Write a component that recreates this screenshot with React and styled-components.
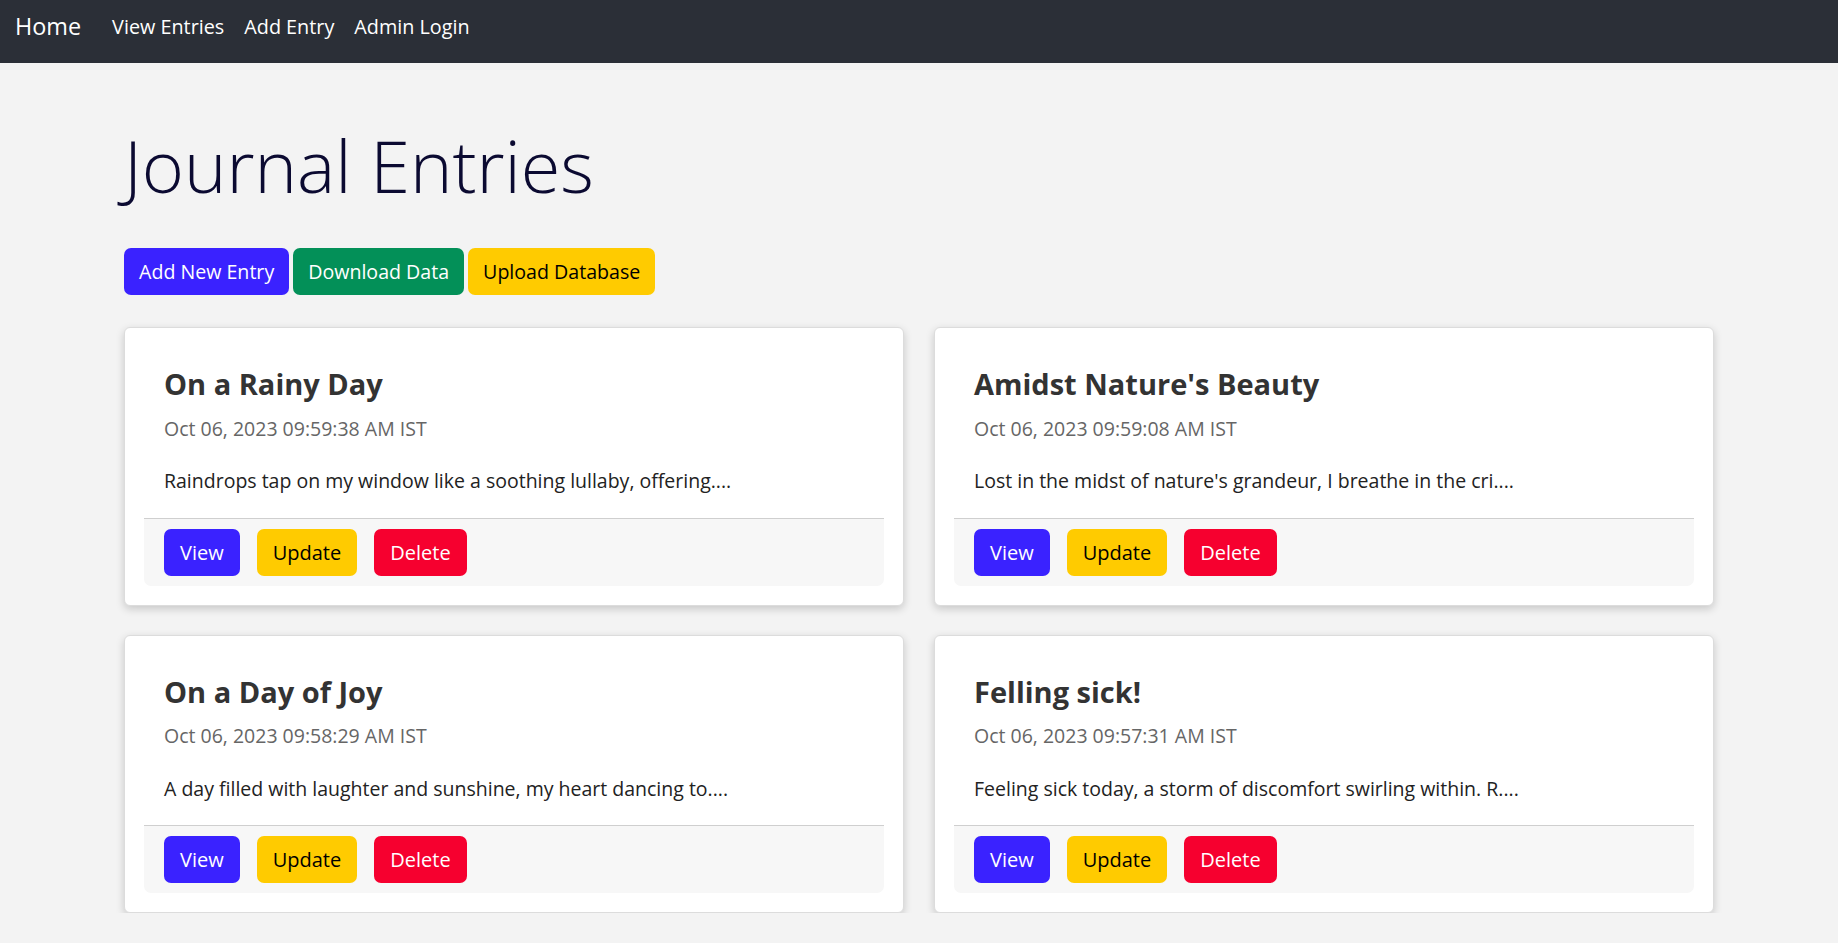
import React from 'react';
import styled, { createGlobalStyle } from 'styled-components';

const GlobalStyle = createGlobalStyle`
    * {
        box-sizing: border-box;
    }
    body {
        margin: 0;
        background-color: #f3f3f3;
        font-family: "Open Sans", "Liberation Sans", sans-serif;
        color: #212529;
    }
`;

const Navbar = styled.nav`
    height: 63px;
    background-color: #2b2f37;
    display: flex;
    align-items: center;
    padding: 0 15px 11px;
`;
const Brand = styled.a`
    color: #fff;
    font-size: 23.4px;
    margin-right: 21px;
    text-decoration: none;
`;
const NavLink = styled.a`
    color: #fff;
    font-size: 19.8px;
    padding: 0 10px;
    text-decoration: none;
`;

const Container = styled.main`
    width: 1590px;
    margin: 0 auto;
    padding-top: 59px;
`;
const Title = styled.h1`
    font-size: 72px;
    font-weight: 300;
    color: #0b0a31;
    margin: 0 0 40px;
    line-height: 1.2;
`;
const Toolbar = styled.div`
    display: flex;
    gap: 4px;
    margin-bottom: 32px;
`;
const Button = styled.button`
    height: 47px;
    padding: 0 ${p => p.$pad || 16}px;
    border: none;
    border-radius: 7px;
    font-family: inherit;
    font-size: ${p => p.$size || 20}px;
    background-color: ${p => p.$bg};
    color: ${p => p.$fg || '#fff'};
    cursor: pointer;
`;

const Grid = styled.div`
    display: grid;
    grid-template-columns: 1fr 1fr;
    gap: 29px 30px;
`;
const Card = styled.div`
    background-color: #fff;
    border: 1px solid #dcdcdc;
    border-radius: 6px;
    padding: 19px;
    box-shadow: 0 3px 8px rgba(0, 0, 0, 0.18);
`;
const CardBody = styled.div`
    padding: 20px 20px 22px;
`;
const CardTitle = styled.h2`
    font-size: 29px;
    font-weight: 700;
    color: #333;
    margin: 0 0 12px;
    line-height: 1.2;
`;
const CardDate = styled.div`
    font-size: 19.5px;
    color: #666;
    line-height: 1.5;
    margin-bottom: 23px;
`;
const CardText = styled.p`
    font-size: 19.5px;
    color: #222;
    line-height: 1.5;
    margin: 0;
`;
const CardFooter = styled.div`
    background-color: #f7f7f7;
    border-top: 1px solid #cfcfcf;
    border-radius: 0 0 7px 7px;
    padding: 10px 20px;
    display: flex;
    gap: 17px;
`;

const BLUE = '#3a22ff';
const GREEN = '#039058';
const YELLOW = '#ffcb00';
const RED = '#f6002f';

const entries = [
    {
        title: 'On a Rainy Day',
        date: 'Oct 06, 2023 09:59:38 AM IST',
        text: 'Raindrops tap on my window like a soothing lullaby, offering....',
    },
    {
        title: "Amidst Nature's Beauty",
        date: 'Oct 06, 2023 09:59:08 AM IST',
        text: "Lost in the midst of nature's grandeur, I breathe in the cri....",
    },
    {
        title: 'On a Day of Joy',
        date: 'Oct 06, 2023 09:58:29 AM IST',
        text: 'A day filled with laughter and sunshine, my heart dancing to....',
    },
    {
        title: 'Felling sick!',
        date: 'Oct 06, 2023 09:57:31 AM IST',
        text: 'Feeling sick today, a storm of discomfort swirling within. R....',
    },
];

const App = () => {
    return (
        <>
            <GlobalStyle />
            <Navbar>
                <Brand href="#">Home</Brand>
                <NavLink href="#">View Entries</NavLink>
                <NavLink href="#">Add Entry</NavLink>
                <NavLink href="#">Admin Login</NavLink>
            </Navbar>
            <Container>
                <Title>Journal Entries</Title>
                <Toolbar>
                    <Button $bg={BLUE} $pad={15} $size={19.6}>Add New Entry</Button>
                    <Button $bg={GREEN} $pad={15} $size={19.6}>Download Data</Button>
                    <Button $bg={YELLOW} $fg="#000" $pad={15} $size={19.6}>Upload Database</Button>
                </Toolbar>
                <Grid>
                    {entries.map(e => (
                        <Card key={e.date}>
                            <CardBody>
                                <CardTitle>{e.title}</CardTitle>
                                <CardDate>{e.date}</CardDate>
                                <CardText>{e.text}</CardText>
                            </CardBody>
                            <CardFooter>
                                <Button $bg={BLUE}>View</Button>
                                <Button $bg={YELLOW} $fg="#000">Update</Button>
                                <Button $bg={RED}>Delete</Button>
                            </CardFooter>
                        </Card>
                    ))}
                </Grid>
            </Container>
        </>
    )
}

export default App
